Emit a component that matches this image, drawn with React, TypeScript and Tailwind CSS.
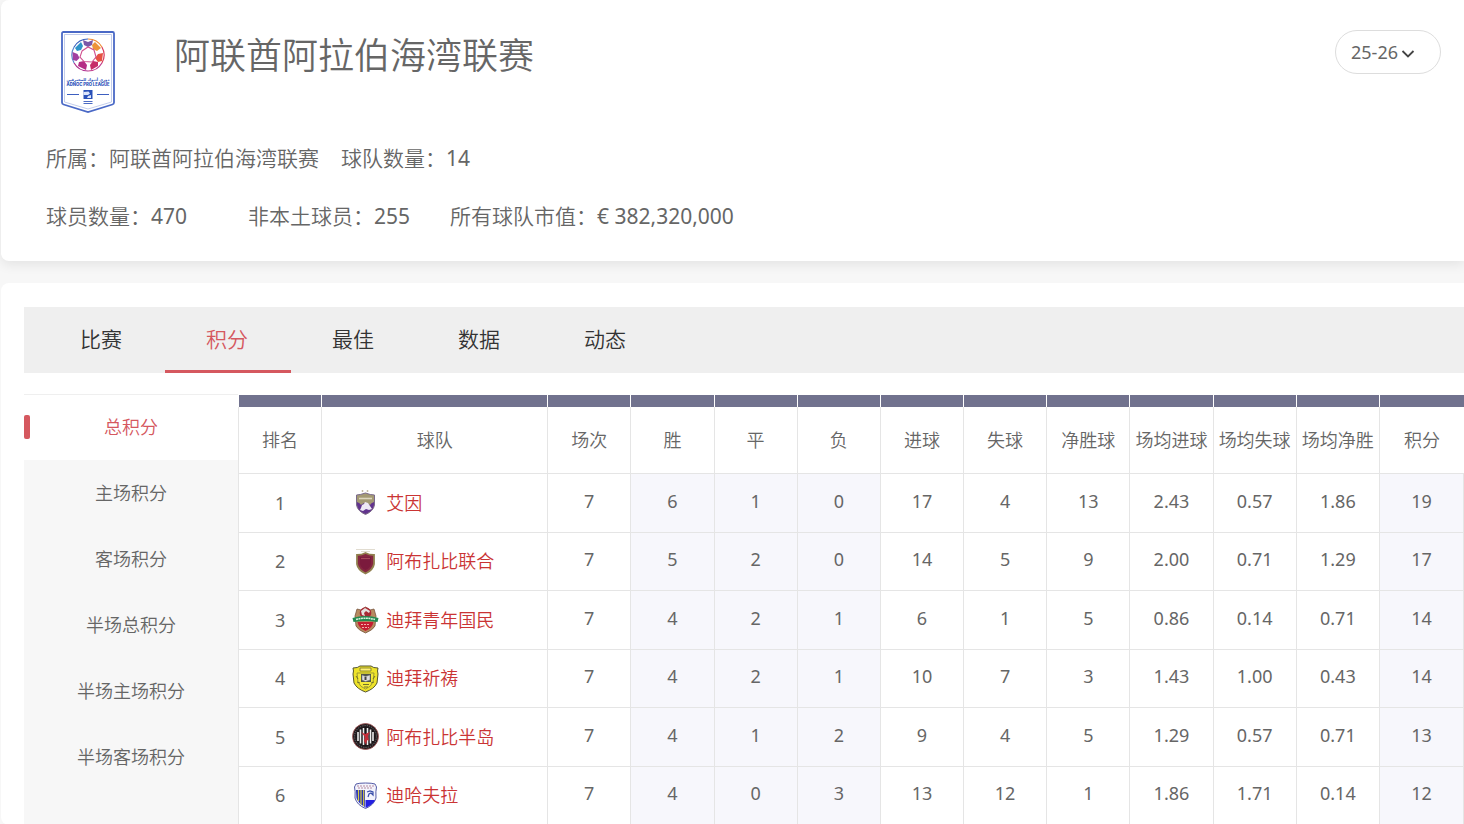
import React, { useState } from "react";

const tabs = ["比赛", "积分", "最佳", "数据", "动态"];
const views = ["总积分", "主场积分", "客场积分", "半场总积分", "半场主场积分", "半场客场积分"];
const columns = ["排名", "球队", "场次", "胜", "平", "负", "进球", "失球", "净胜球", "场均进球", "场均失球", "场均净胜", "积分"];

function LeagueLogo() {
  return (
    <svg viewBox="0 0 54 82" className="mt-px h-[82px] w-[54px]" role="img" aria-label="ADNOC Pro League">
      <path d="M2.500 1h49q1.500 0 1.500 1.500v69q0 1.600-1.600 2L27 81 2.600 73.500Q1 73 1 71.500v-69Q1 1 2.500 1Z" fill="#fff" stroke="#4a69c6" strokeWidth="1.800" />
      <path d="M3.500 3.500h47v67.500L27 78 3.500 71Z" fill="none" stroke="#a9b8e4" strokeWidth=".7" />
      <g fill="none" strokeWidth="1.200">
        <path d="M27 8a16 16 0 0 1 13.900 8" stroke="#ef8a35" />
        <path d="M40.900 16a16 16 0 0 1 0 16" stroke="#d93a5c" />
        <path d="M40.900 32A16 16 0 0 1 27 40" stroke="#c03c8c" />
        <path d="M27 40a16 16 0 0 1-13.900-8" stroke="#b02f8e" />
        <path d="M13.100 32a16 16 0 0 1 0-16" stroke="#5a86cc" />
        <path d="M13.100 16A16 16 0 0 1 27 8" stroke="#3960bd" />
      </g>
      <path d="m22 9 5 2 5-2-1 5-4 2-4-2Z" fill="#7a58a8" />
      <path d="m34 11 6 6-4 3-4-2-1-4Z" fill="#ed9339" />
      <path d="m42 22-1 8-4 1-3-4 3-4Z" fill="#e65243" />
      <path d="m37 35-7 4-1-5 3-4 5 1Z" fill="#c62c68" />
      <path d="m25 39-8-4 1-4 5-1 3 4Z" fill="#b52d85" />
      <path d="m12 29-.5-8 5 2 2 4-3 3Z" fill="#a13fa0" />
      <path d="m14 17 6-6 2 4-2 4-4 1Z" fill="#2f94c9" />
      <path d="m21 20 6-4 6 3 2 7-4 5-8-.5-4-4.500Z" fill="none" stroke="#d0508f" strokeWidth="1.100" />
      <text x="27" y="49.500" textAnchor="middle" fontSize="3.800" fontWeight="700" fill="#2950b8" fontFamily="DejaVu Sans, sans-serif">دوري أدنوك للمحترفين</text>
      <text x="27" y="55" textAnchor="middle" fontSize="4.200" fontWeight="800" fill="#2950b8" fontFamily="Inter, sans-serif">ADNOC PRO LEAGUE</text>
      <path d="M6 63.500h12M36 63.500h12" stroke="#3d5fc0" strokeWidth="1.200" />
      <path d="M22.500 59h9v9h-9Z" fill="#2950b8" />
      <path d="m22.500 61 5-.5 1.500 2-2 1.500h-4.500ZM27 65l3-1v3h-4Z" fill="#dbe4fa" />
      <path d="M22.500 70.500h9M22.500 72.500h9" stroke="#4c6bc4" />
    </svg>
  );
}

function AlAin() {
  return (
    <>
      <path d="M10.500 1v2m5-2v2" stroke="#c2bba2" strokeWidth="1.500" />
      <path d="M4.500 6q4-.2 9-2 5 2 9 2v10q-1 6-9 9.500Q5.500 22 4.500 16Z" fill="#a39973" stroke="#7a6a8c" strokeWidth="1" />
      <path d="M5 13q3 1 4 3 4-4 9 0 1-2 4-3v3q-1 6-8.500 9Q6 22 5 16Z" fill="#61338e" />
      <path d="m9 19 1-3 2-1 1-2 3 1 2 3 2 3-3 1-3-1-3 2-3-1Z" fill="#eee9f4" />
      <path d="M7 9.500h13" stroke="#ddd6bd" strokeWidth="1.600" />
    </>
  );
}

function AlWahda() {
  return (
    <>
      <path d="M4 1.500h19M9 3.500h9" stroke="#d9d3c4" strokeWidth=".8" />
      <path d="M5 7q5 0 8.500-2Q17 7 22 7v9q-1 6-8.500 9.500Q6 22 5 16Z" fill="#852641" stroke="#91804f" strokeWidth="1.800" />
      <path d="M8 9h11v7q-1 4-5.500 6Q9 20 8 16Z" fill="#7b1a3d" />
      <path d="M9 10.500h9" stroke="#a5485a" strokeWidth="1.200" />
    </>
  );
}

function Shabab() {
  return (
    <>
      <path d="m5 3 4 1 4.500-3L18 4l4-1 2 7-1 10q-2 4-9.500 7Q6 24 4 20L3 10Z" fill="#b78b60" stroke="#78563e" strokeWidth=".8" />
      <circle cx="13.500" cy="7" r="5.800" fill="#a82b35" />
      <path d="m9 5 4-3 5 3-1 2-3-2-2 2 1 3-3-1Z" fill="#e5e0de" />
      <path d="M5.500 16h16q-1 6-8 9-7-3-8-9Z" fill="#c51e31" />
      <path d="M.5 12q13-4 26 0l-1 4q-12-2-24 0Z" fill="#228b50" />
      <path d="M4 13.500q9.500-2.500 19 0" fill="none" stroke="#d9f0dc" strokeWidth="1.500" strokeDasharray="2 .5" />
      <path d="M9 18.500h9M10 21.500h7" stroke="#f2b1ab" strokeWidth="1.200" strokeDasharray="2 1" />
    </>
  );
}

function AlWasl() {
  return (
    <>
      <path d="M1 3q5 0 7-2h11q2 2 7 2-1 3 0 6l-1 9q-3 6-11.500 9Q5 24 2 18L1 9q1-3 0-6Z" fill="#eee329" stroke="#54552e" />
      <path d="M8 3h11v3H8Z" fill="#fff176" stroke="#777328" strokeWidth=".8" />
      <path d="M5 8h17l-1 9q-2 5-7.500 7Q8 22 6 17Z" fill="#f4ea38" stroke="#8a8832" strokeWidth=".8" />
      <path d="M9 9h10v8H9Z" fill="#50544a" />
      <path d="m10 10 3.500 1.500L18 10v5l-4.500 1.500L10 15Z" fill="#ddd" stroke="#777" strokeWidth=".5" />
      <path d="M12.500 12h2v3h-2" fill="#444" />
      <path d="M11 19.500h6M12 22h4M4 11l2 3M23 11l-2 3M5 17l3 1M22 17l-3 1" stroke="#74722a" fill="none" />
    </>
  );
}

function AlJazira() {
  return (
    <>
      <circle cx="13.500" cy="13.500" r="13" fill="#241d20" stroke="#a65454" strokeWidth=".8" />
      <circle cx="13.500" cy="13.500" r="11" fill="none" stroke="#888" strokeWidth=".8" strokeDasharray="1 1.300" />
      <circle cx="13.500" cy="13.500" r="9.200" fill="#161316" />
      <path d="M6 9v9M8.500 6.500v14M11.500 5v17M15.500 5v17M18.500 6.500v14M21 9v9" stroke="#eee" strokeWidth="1.600" />
      <path d="m9 9 4 2 5-2-2 4 1 5-2-1-1 5-2-4 1-4Z" fill="#c42d38" />
    </>
  );
}

function Dhafra() {
  return (
    <>
      <path d="M4 2q3-1 9.500-1T23 2q1 2 1.500 3-1 4-.5 11-2 7-10.500 10.500Q5 23 3 16q.5-7-.5-11Q3 4 4 2Z" fill="#f3f3fc" stroke="#545ba6" />
      <path d="M4 8h9v17q-7-4-8.500-9Z" fill="#2632b7" />
      <path d="M6.500 8v11M9 8v14.500M11.700 8v16" stroke="#d6cb43" strokeWidth="1.200" />
      <path d="M13.500 18H23q-1 4-9.500 8Z" fill="#2420e0" />
      <path d="M5 4h17M6 6h15" stroke="#b58a9f" strokeWidth="1" strokeDasharray="2 1" />
      <path d="m15 10 3-1 3 1v3l-2-2-2 1-1 3" fill="none" stroke="#384ea9" strokeWidth="1.200" />
    </>
  );
}

const teams = [
  { name: "艾因", Crest: AlAin, stats: ["7", "6", "1", "0", "17", "4", "13", "2.43", "0.57", "1.86", "19"] },
  { name: "阿布扎比联合", Crest: AlWahda, stats: ["7", "5", "2", "0", "14", "5", "9", "2.00", "0.71", "1.29", "17"] },
  { name: "迪拜青年国民", Crest: Shabab, stats: ["7", "4", "2", "1", "6", "1", "5", "0.86", "0.14", "0.71", "14"] },
  { name: "迪拜祈祷", Crest: AlWasl, stats: ["7", "4", "2", "1", "10", "7", "3", "1.43", "1.00", "0.43", "14"] },
  { name: "阿布扎比半岛", Crest: AlJazira, stats: ["7", "4", "1", "2", "9", "4", "5", "1.29", "0.57", "0.71", "13"] },
  { name: "迪哈夫拉", Crest: Dhafra, stats: ["7", "4", "0", "3", "13", "12", "1", "1.86", "1.71", "0.14", "12"] },
];

const tinted = [1, 2, 3, 10];

export default function App() {
  const [tab, setTab] = useState("积分");
  const [view, setView] = useState("总积分");

  return (
    <div className="flex h-screen flex-col overflow-y-auto bg-[#f7f7f7] pl-px font-['Noto_Sans','Noto_Sans_CJK_SC',sans-serif] font-[350] text-[#666] [scrollbar-width:none]">
      <header className="shrink-0 rounded-l-lg bg-white pb-4 shadow-[0_4px_12px_rgba(0,0,0,0.08)]">
        <div className="flex items-start pt-[30px] pr-[23px] pl-[60px]">
          <LeagueLogo />
          <h1 className="ml-[59px] text-[36px] leading-[52px] font-[350]">阿联酋阿拉伯海湾联赛</h1>
          <div className="relative ml-auto">
            <select
              aria-label="赛季"
              className="h-11 w-[106px] appearance-none rounded-full border border-[#ddd] bg-white pl-[15px] text-[18px] font-normal text-[#666] outline-none"
            >
              <option>25-26</option>
            </select>
            <svg viewBox="0 0 14 8" className="pointer-events-none absolute top-5 left-[66px] h-2 w-3.5" fill="none" stroke="#444" strokeWidth="1.800">
              <path d="m1.500 1 5.500 5.500L12.500 1" />
            </svg>
          </div>
        </div>
        <div className="pt-4 pl-[45px] text-[21px] leading-[58px]">
          <div className="flex gap-[22px]">
            <p>所属：阿联酋阿拉伯海湾联赛</p>
            <p>球队数量：<span className="font-normal">14</span></p>
          </div>
          <div className="flex">
            <p className="w-[202px]">球员数量：<span className="font-normal">470</span></p>
            <p className="w-[202px]">非本土球员：<span className="font-normal">255</span></p>
            <p>所有球队市值：<span className="font-normal">€ 382,320,000</span></p>
          </div>
        </div>
      </header>

      <main className="mt-[22px] flex grow shrink-0 flex-col rounded-l-lg bg-white pt-6 pl-[23px]">
        <nav className="flex h-[66px] bg-[#efefef] pl-3.5">
          {tabs.map((t) => (
            <button
              key={t}
              onClick={() => setTab(t)}
              className={
                tab === t
                  ? "relative w-[126px] text-[21px] text-[#d5585f]"
                  : "relative w-[126px] text-[21px] text-[#333]"
              }
            >
              {t}
              {tab === t && <span className="absolute bottom-0 left-px h-[3px] w-full bg-[#d5585f]" />}
            </button>
          ))}
        </nav>

        <div className="mt-[21px] flex grow">
          <aside className="w-[214px] shrink-0 bg-[#f7f7f7]">
            {views.map((v) => (
              <button
                key={v}
                onClick={() => setView(v)}
                className={
                  view === v
                    ? "relative block h-[66px] w-full border-t border-[#efefef] bg-white text-[18px] text-[#d5585f]"
                    : "relative block h-[66px] w-full text-[18px]"
                }
              >
                {view === v && <span className="absolute top-5 left-0 h-6 w-1.5 rounded-xs bg-[#d5585f]" />}
                {v}
              </button>
            ))}
          </aside>

          <div className="mt-px grow">
            <table className="w-full table-fixed border-separate border-spacing-0 text-center text-[18px]">
              <thead>
                <tr>
                  {columns.map((c) => (
                    <th key={c} className={c === "球队" ? "w-[226px] p-0 font-[350]" : "p-0 font-[350] last:w-[85px]"}>
                      <div className="h-3 border-l border-white bg-[#71728e]" />
                      <div className="flex h-[67px] items-center justify-center border-b border-l border-[#e5e5e5] whitespace-nowrap">{c}</div>
                    </th>
                  ))}
                </tr>
              </thead>
              <tbody>
                {teams.map(({ name, Crest, stats }, i) => (
                  <tr key={name} className="odd:h-[59px] even:h-[58px]">
                    <td className="border-b border-l border-[#e5e5e5] p-0 font-normal">{i + 1}</td>
                    <td className="border-b border-l border-[#e5e5e5] p-0 pl-[30px]">
                      <a href="#team" className="flex items-center gap-[7px] text-[#ca3434]">
                        <svg viewBox="0 0 27 28" className="h-7 w-[27px] shrink-0" aria-hidden="true">
                          <Crest />
                        </svg>
                        {name}
                      </a>
                    </td>
                    {stats.map((s, k) => (
                      <td
                        key={k}
                        className={
                          tinted.includes(k)
                            ? "border-b border-l border-[#e5e5e5] bg-[#f7f7fc] p-0 pb-1 font-normal last:border-r"
                            : "border-b border-l border-[#e5e5e5] p-0 pb-1 font-normal"
                        }
                      >
                        {s}
                      </td>
                    ))}
                  </tr>
                ))}
              </tbody>
            </table>
          </div>
        </div>
      </main>
    </div>
  );
}
